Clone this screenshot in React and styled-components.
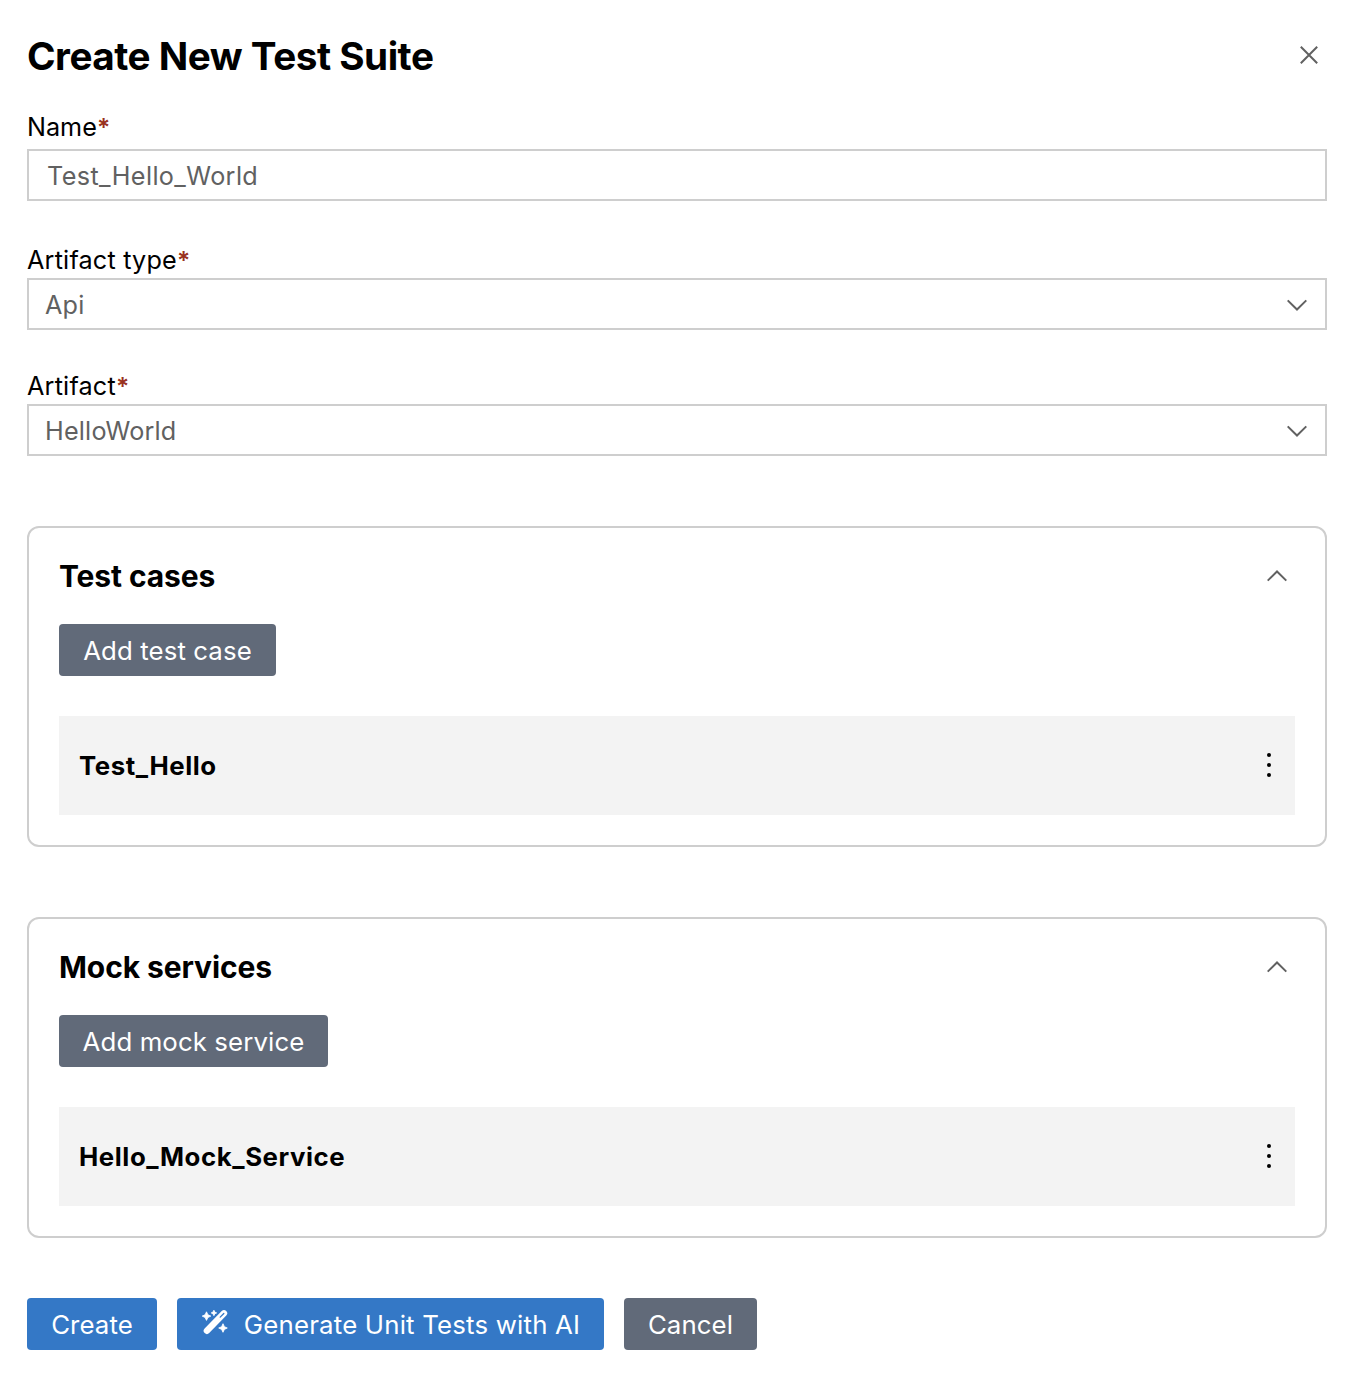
import React from "react";
import styled, { createGlobalStyle, css } from "styled-components";

const GlobalStyle = createGlobalStyle`
  *, *::before, *::after { box-sizing: border-box; }
  body {
    margin: 0;
    background: #ffffff;
    color: #000000;
    font-family: Inter, "Liberation Sans", sans-serif;
    font-size: 25.2px;
    font-weight: 430;
    line-height: 32px;
  }
`;

const Page = styled.form`
  display: flex;
  flex-direction: column;
  padding: 31px 35px 48px 27px;
`;

const Header = styled.header`
  display: flex;
  align-items: center;
  justify-content: space-between;
  height: 50px;
  padding-right: 8px;
`;

const Title = styled.h1`
  margin: 0;
  font-size: 38.7px;
  font-weight: 700;
  line-height: 50px;
  letter-spacing: -0.5px;
  white-space: nowrap;
`;

const IconButton = styled.button`
  display: flex;
  margin-bottom: 2px;
  padding: 0;
  border: 0;
  background: none;
  color: ${(p) => p.$color || "#616161"};
`;

const Field = styled.div`
  display: flex;
  flex-direction: column;
  margin-top: ${(p) => p.$top}px;
`;

const Label = styled.label`
  height: 32px;
  margin-bottom: ${(p) => p.$gap}px;
  letter-spacing: ${(p) => p.$spacing || 0}px;
  white-space: nowrap;
`;

const Required = styled.span`
  color: #9a3120;
  font-size: 24.5px;
  font-weight: 600;
`;

const controlBox = css`
  width: 100%;
  height: 52px;
  border: 2px solid #cecece;
  border-radius: 0;
  background: #ffffff;
  color: #616161;
`;

const TextInput = styled.input`
  ${controlBox}
  padding: 2px 18px 0;
  font: inherit;
  letter-spacing: 0.38px;
  outline: none;
`;

const Select = styled.div`
  ${controlBox}
  display: flex;
  align-items: center;
  justify-content: space-between;
  padding: 2px 18px 0 16px;
  letter-spacing: 0.2px;
`;

const Card = styled.section`
  display: flex;
  flex-direction: column;
  align-items: flex-start;
  height: 321px;
  margin-top: 70px;
  padding: 28px 30px 30px;
  border: 2px solid #cecece;
  border-radius: 12px;
`;

const CardHeader = styled.div`
  display: flex;
  align-items: center;
  justify-content: space-between;
  width: 100%;
  height: 40px;
  padding-right: 8px;
`;

const CardTitle = styled.h2`
  margin: 0;
  font-size: 30px;
  font-weight: 700;
  line-height: 40px;
  letter-spacing: -0.1px;
`;

const Button = styled.button`
  display: flex;
  align-items: center;
  justify-content: center;
  flex: none;
  width: ${(p) => p.$width}px;
  height: 52px;
  padding: 2px 0 0;
  border: 0;
  border-radius: 4px;
  background: ${(p) => (p.$primary ? "#3478c6" : "#616a79")};
  color: #ffffff;
  font: inherit;
  font-size: 25.8px;
  letter-spacing: ${(p) => p.$spacing || 0.1}px;
  white-space: nowrap;
`;

const CardButton = styled(Button)`
  margin-top: 28px;
`;

const Item = styled.div`
  display: flex;
  align-items: center;
  justify-content: space-between;
  width: 100%;
  height: 99px;
  margin-top: 40px;
  padding: 0 24px 0 20px;
  background: #f3f3f3;
`;

const ItemName = styled.span`
  font-size: 25.8px;
  font-weight: 700;
  letter-spacing: 0.57px;
`;

const Actions = styled.footer`
  display: flex;
  gap: 20px;
  margin-top: 60px;
`;

const WandSvg = styled.svg`
  margin: -7px 16px 0 1px;
`;

const ChevronSvg = styled.svg`
  margin-bottom: ${(p) => (p.$up ? 1 : 0)}px;
`;

const CloseIcon = () => (
  <svg width="20" height="20" viewBox="0 0 20 20" fill="none" stroke="currentColor" strokeWidth="2">
    <path d="M1.8 1.8 18.2 18.2M18.2 1.8 1.8 18.2" />
  </svg>
);

const Chevron = ({ up }) => (
  <ChevronSvg $up={up} width="20" height="12" viewBox="0 0 20 12" fill="none" stroke="#616161" strokeWidth="2">
    <path d={up ? "M.7 10.6 10 1.5l9.3 9.1" : "M.7 1.4 10 10.5l9.3-9.1"} />
  </ChevronSvg>
);

const MoreIcon = () => (
  <svg width="4" height="24" viewBox="0 0 4 24" fill="currentColor">
    <circle cx="2" cy="2" r="2" />
    <circle cx="2" cy="12" r="2" />
    <circle cx="2" cy="22" r="2" />
  </svg>
);

const WandIcon = () => (
  <WandSvg width="26" height="26" viewBox="0 0 26 26" fill="#fff">
    <g stroke="#fff" strokeWidth=".8" strokeLinejoin="round">
      <path d="M4.5 2.8 5.9 5.8 8.8 7.1 5.9 8.5 4.5 11.4 3.1 8.5 .2 7.1 3.1 5.8z" />
      <path d="m11.9 1.2.9 1.9 1.9.8-1.9.9-.9 1.9-.9-1.9L9.2 3.9l1.8-.8z" />
      <path d="m21 14.7 1.4 3 2.9 1.3-2.9 1.4-1.4 2.9-1.4-2.9-2.9-1.4 2.9-1.3z" />
    </g>
    <path d="M4.9 21.8 22 4.3" fill="none" stroke="#fff" strokeWidth="6.4" strokeLinecap="round" />
    <path d="m18.2 8.1 3.6-3.6" fill="none" stroke="#3478c6" strokeWidth="1.3" strokeLinecap="round" />
  </WandSvg>
);

const SelectField = ({ label, value, top }) => (
  <Field $top={top}>
    <Label $gap={2} $spacing={0.2}>
      {label}
      <Required>*</Required>
    </Label>
    <Select role="combobox" aria-label={label}>
      <span>{value}</span>
      <Chevron />
    </Select>
  </Field>
);

const ItemCard = ({ title, action, actionWidth, item }) => (
  <Card>
    <CardHeader>
      <CardTitle>{title}</CardTitle>
      <Chevron up />
    </CardHeader>
    <CardButton type="button" $width={actionWidth}>
      {action}
    </CardButton>
    <Item>
      <ItemName>{item}</ItemName>
      <IconButton type="button" $color="#000" aria-label="More actions">
        <MoreIcon />
      </IconButton>
    </Item>
  </Card>
);

export default function App() {
  return (
    <>
      <GlobalStyle />
      <Page>
        <Header>
          <Title>Create New Test Suite</Title>
          <IconButton type="button" aria-label="Close">
            <CloseIcon />
          </IconButton>
        </Header>
        <Field $top={30}>
          <Label $gap={6}>
            Name<Required>*</Required>
          </Label>
          <TextInput defaultValue="Test_Hello_World" />
        </Field>
        <SelectField label="Artifact type" value="Api" top={43} />
        <SelectField label="Artifact" value="HelloWorld" top={40} />
        <ItemCard title="Test cases" action="Add test case" actionWidth={217} item="Test_Hello" />
        <ItemCard title="Mock services" action="Add mock service" actionWidth={269} item="Hello_Mock_Service" />
        <Actions>
          <Button type="button" $primary $width={130}>
            Create
          </Button>
          <Button type="button" $primary $width={427} $spacing={0.2}>
            <WandIcon />
            Generate Unit Tests with AI
          </Button>
          <Button type="button" $width={133}>
            Cancel
          </Button>
        </Actions>
      </Page>
    </>
  );
}
